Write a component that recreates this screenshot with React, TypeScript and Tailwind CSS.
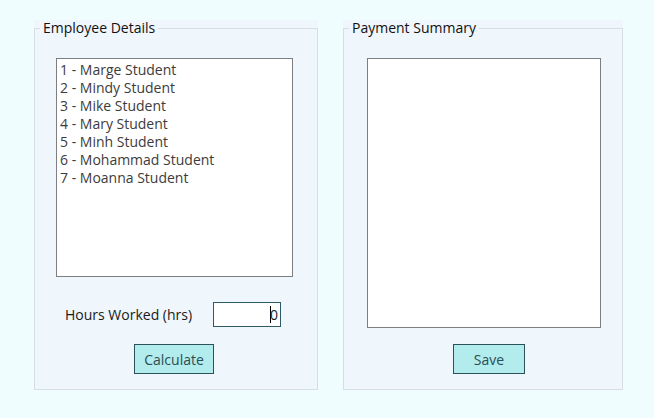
import React from "react";

const font = { fontFamily: '"Open Sans", "Noto Sans", sans-serif' };

const employees = [
  "1 - Marge Student",
  "2 - Mindy Student",
  "3 - Mike Student",
  "4 - Mary Student",
  "5 - Minh Student",
  "6 - Mohammad Student",
  "7 - Moanna Student",
];

function Group({ title, width, children }: { title: string; width: string; children: React.ReactNode }) {
  return (
    <div className={`bg-[#eff6fc] ${width} h-[370px] flex flex-col`}>
      <fieldset className="m-0 p-0 border border-[#d6dee4] flex-1 min-h-0 min-w-0">
        <legend className="ml-[5px] px-[3px] text-[14px] leading-[16px] text-[#111]">{title}</legend>
        {children}
      </fieldset>
    </div>
  );
}

export default function App() {
  return (
    <div className="w-[654px] h-[418px] bg-[#f0fdfe] pt-[20px] pl-[34px] flex gap-[25px]" style={font}>
      <Group title="Employee Details" width="w-[284px]">
        <div className="ml-[21px] mt-[22px] w-[237px] h-[219px] bg-white border border-[#7d7f82] pl-[3px] pt-[2px] text-[14px] leading-[18px] text-[#3c3c3c]">
          {employees.map((e) => (
            <div key={e}>{e}</div>
          ))}
        </div>
        <div className="flex items-center mt-[25px] ml-[30px]">
          <span className="text-[14px] text-[#1a1a1a] w-[148px]">Hours Worked (hrs)</span>
          <div className="w-[68px] h-[25px] bg-white border border-[#2f5a6a] flex items-center justify-end pr-[2px] text-[14px] text-[#1a1a1a]">
            <span className="w-px h-[17px] bg-black mr-[-1px]"></span>
            <span>0</span>
          </div>
        </div>
        <div className="flex mt-[17px] ml-[99px]">
          <button className="w-[80px] h-[30px] bg-[#b2ecec] border border-[#2c5259] text-[14px] text-[#2a4e55]">Calculate</button>
        </div>
      </Group>
      <Group title="Payment Summary" width="w-[280px]">
        <div className="ml-[23px] mt-[22px] w-[234px] h-[270px] bg-white border border-[#7d7f82]"></div>
        <div className="flex mt-[16px] ml-[109px]">
          <button className="w-[72px] h-[30px] bg-[#b2ecec] border border-[#2c5259] text-[14px] text-[#2a4e55]">Save</button>
        </div>
      </Group>
    </div>
  );
}
